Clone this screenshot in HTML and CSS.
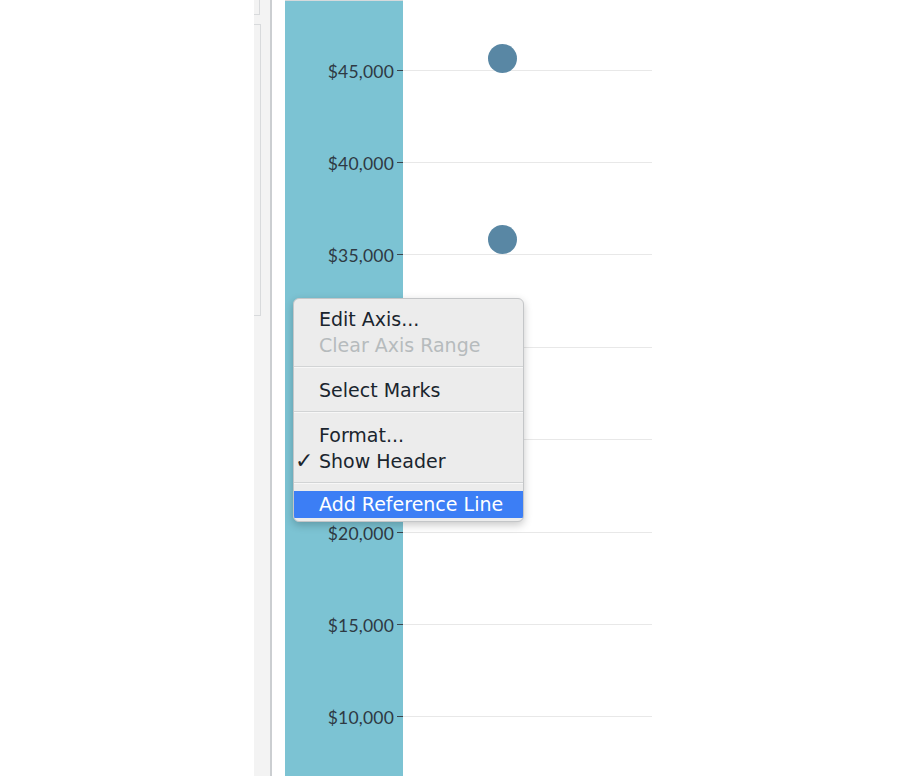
FILE: index.html
```html
<!DOCTYPE html>
<html>
<head>
<meta charset="utf-8">
<link rel="stylesheet" href="styles.css">
</head>
<body>
<div class="page">
  <div class="spacer"></div>
  <div class="strip">
    <div class="strip-box-top"></div>
    <div class="strip-box"></div>
  </div>
  <div class="gap"></div>
  <div class="axis">
    <div class="axis-row"><span class="label">$45,000</span><span class="tick"></span></div>
    <div class="axis-row"><span class="label">$40,000</span><span class="tick"></span></div>
    <div class="axis-row"><span class="label">$35,000</span><span class="tick"></span></div>
    <div class="axis-row"><span class="tick"></span></div>
    <div class="axis-row"><span class="tick"></span></div>
    <div class="axis-row"><span class="label">$20,000</span><span class="tick"></span></div>
    <div class="axis-row"><span class="label">$15,000</span><span class="tick"></span></div>
    <div class="axis-row"><span class="label">$10,000</span><span class="tick"></span></div>
  </div>
  <div class="plot">
    <div class="grid-row"><span class="gridline"></span></div>
    <div class="grid-row"><span class="gridline"></span></div>
    <div class="grid-row"><span class="gridline"></span></div>
    <div class="grid-row"><span class="gridline"></span></div>
    <div class="grid-row"><span class="gridline"></span></div>
    <div class="grid-row"><span class="gridline"></span></div>
    <div class="grid-row"><span class="gridline"></span></div>
    <div class="grid-row"><span class="gridline"></span></div>
    <span class="mark mark-1"></span>
    <span class="mark mark-2"></span>
  </div>
  <div class="menu">
    <div class="item">Edit Axis...</div>
    <div class="item disabled">Clear Axis Range</div>
    <div class="sep"></div>
    <div class="item">Select Marks</div>
    <div class="sep"></div>
    <div class="item">Format...</div>
    <div class="item checked"><span class="check">✓</span>Show Header</div>
    <div class="sep sep-last"></div>
    <div class="item active">Add Reference Line</div>
  </div>
</div>
</body>
</html>
```

FILE: styles.css
```css
html, body {
  margin: 0;
  padding: 0;
  background: #ffffff;
}

.page {
  position: relative;
  display: flex;
  height: 776px;
  width: 908px;
  overflow: hidden;
}

.spacer {
  width: 254px;
  flex: none;
}

.strip {
  width: 16px;
  flex: none;
  background: #f3f3f3;
  border-right: 2px solid #cbced1;
  display: flex;
  flex-direction: column;
}

.strip-box-top {
  width: 5px;
  height: 14px;
  border-right: 1px solid #d8dadc;
  border-bottom: 1px solid #d8dadc;
  flex: none;
}

.strip-box {
  margin-top: 9px;
  width: 6px;
  height: 290px;
  border-top: 1px solid #d8dadc;
  border-right: 1px solid #d8dadc;
  border-bottom: 1px solid #d8dadc;
  flex: none;
}

.gap {
  width: 13px;
  flex: none;
}

.axis {
  width: 118px;
  flex: none;
  background: #7cc3d3;
  border-top: 1px solid #d6dadc;
  box-sizing: border-box;
  padding-top: 22.8px;
}

.axis-row {
  height: 92.43px;
  display: flex;
  align-items: center;
  justify-content: flex-end;
}

.label {
  font-family: Lato, "Open Sans", sans-serif;
  font-size: 17.5px;
  letter-spacing: 0.2px;
  color: #2e3943;
  margin-right: 3px;
  position: relative;
  top: 1px;
}

.tick {
  width: 6px;
  height: 1px;
  background: #3a444c;
}

.plot {
  position: relative;
  width: 249px;
  flex: none;
  padding-top: 23.8px;
}

.grid-row {
  height: 92.43px;
  display: flex;
  align-items: center;
}

.gridline {
  display: block;
  width: 100%;
  height: 1px;
  background: #e8e8e8;
}

.mark {
  position: absolute;
  width: 29px;
  height: 29px;
  border-radius: 50%;
  background: #5987a4;
}

.mark-1 {
  left: 85px;
  top: 44px;
}

.mark-2 {
  left: 85px;
  top: 225px;
}

.menu {
  position: absolute;
  left: 293px;
  top: 298px;
  width: 231px;
  height: 224px;
  box-sizing: border-box;
  background: #ececec;
  border: 1px solid #c4c6c8;
  border-radius: 6px;
  box-shadow: 0 3px 9px rgba(0, 0, 0, 0.22);
  padding-top: 7px;
  font-family: "DejaVu Sans", Verdana, sans-serif;
  font-size: 19px;
  color: #1a252e;
  overflow: hidden;
}

.item {
  height: 26px;
  line-height: 26px;
  padding-left: 25px;
  white-space: nowrap;
  position: relative;
}

.item.disabled {
  color: #b6bbbd;
}

.check {
  position: absolute;
  left: 1px;
  top: 0;
  font-size: 22px;
}

.item.active {
  background: #3c7ef5;
  color: #ffffff;
  height: 27px;
  line-height: 27px;
}

.sep {
  height: 19px;
  position: relative;
}

.sep::after {
  content: "";
  position: absolute;
  left: 0;
  right: 0;
  top: 8px;
  height: 1px;
  background: #d2d4d5;
  border-bottom: 1px solid #f7f7f7;
}

.sep-last {
  height: 17px;
}
```
